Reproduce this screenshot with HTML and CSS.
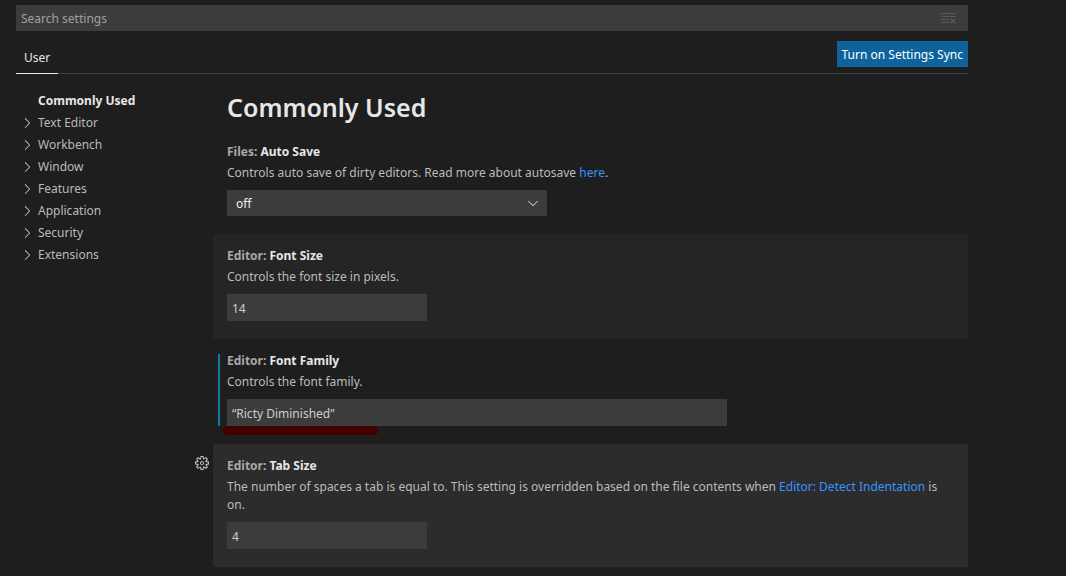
FILE: index.html
```html
<!DOCTYPE html>
<html lang="en">
<head>
<meta charset="utf-8">
<title>Settings</title>
<link rel="stylesheet" href="styles.css">
</head>
<body>
<svg width="0" height="0" class="symbols" aria-hidden="true">
  <symbol id="chevron-right" viewBox="0 0 16 16"><path d="M10.072 8.024L5.715 3.667l.618-.62L11 7.716v.618L6.333 13l-.618-.619 4.357-4.357z"/></symbol>
</svg>
<div class="settings">
  <header class="header">
    <div class="search">
      <input class="search-input" type="text" placeholder="Search settings" aria-label="Search settings">
      <button class="icon-button clear" type="button" aria-label="Clear search">
        <svg width="16" height="16" viewBox="0 0 16 16" fill="none" stroke="currentColor"><path d="M1 3.500h15M1 6.500h15M1 9.500h8M1 12.500h8"/><path d="M10.500 9l4.500 4M15 9l-4.500 4" stroke-width="1.500"/></svg>
      </button>
    </div>
    <div class="tabs">
      <button class="tab" type="button">User</button>
      <button class="sync" type="button">Turn on Settings Sync</button>
    </div>
  </header>
  <div class="content">
    <nav class="toc" aria-label="Settings sections">
      <a class="toc-row selected" href="#common">Commonly Used</a>
      <a class="toc-row" href="#text"><svg class="chevron"><use href="#chevron-right"/></svg>Text Editor</a>
      <a class="toc-row" href="#workbench"><svg class="chevron"><use href="#chevron-right"/></svg>Workbench</a>
      <a class="toc-row" href="#window"><svg class="chevron"><use href="#chevron-right"/></svg>Window</a>
      <a class="toc-row" href="#features"><svg class="chevron"><use href="#chevron-right"/></svg>Features</a>
      <a class="toc-row" href="#application"><svg class="chevron"><use href="#chevron-right"/></svg>Application</a>
      <a class="toc-row" href="#security"><svg class="chevron"><use href="#chevron-right"/></svg>Security</a>
      <a class="toc-row" href="#extensions"><svg class="chevron"><use href="#chevron-right"/></svg>Extensions</a>
    </nav>
    <main class="list">
      <h1 class="heading" id="common">Commonly Used</h1>
      <section class="item">
        <label class="title" for="autosave"><span class="category">Files:</span> Auto Save</label>
        <p class="description">Controls auto save of dirty editors. Read more about autosave <a class="link" href="#here">here</a>.</p>
        <div class="select-box">
          <select class="select" id="autosave"><option>off</option></select>
          <svg class="select-arrow" viewBox="0 0 16 16"><path d="M7.976 10.072l4.357-4.357.62.618L8.284 11h-.618L3 6.333l.619-.618 4.357 4.357z"/></svg>
        </div>
      </section>
      <section class="item focused">
        <label class="title" for="fontsize"><span class="category">Editor:</span> Font Size</label>
        <p class="description">Controls the font size in pixels.</p>
        <input class="field" id="fontsize" type="text" value="14">
      </section>
      <section class="item modified">
        <label class="title" for="fontfamily"><span class="category">Editor:</span> Font Family</label>
        <p class="description">Controls the font family.</p>
        <input class="field wide" id="fontfamily" type="text" value="“Ricty Diminished”">
        <span class="marker"></span>
      </section>
      <section class="item hovered">
        <button class="icon-button gear" type="button" aria-label="More actions">
          <svg width="16" height="16" viewBox="0 0 16 16" fill="currentColor" fill-rule="evenodd"><path d="M9.100 4.400L8.600 2H7.400l-.5 2.400-.7.300-2-1.300-.9.800 1.300 2-.2.700-2.400.5v1.200l2.400.5.300.8-1.300 2 .8.800 2-1.300.8.300.4 2.300h1.200l.5-2.400.8-.3 2 1.300.8-.8-1.300-2 .3-.8 2.300-.4V7.400l-2.400-.5-.3-.8 1.300-2-.8-.8-2 1.300-.7-.2zM9.400 1l.5 2.400L12 2.100l2 2-1.400 2.100 2.400.4v2.800l-2.400.5L14 12l-2 2-2.100-1.400-.5 2.400H6.600l-.5-2.400L4 13.900l-2-2 1.400-2.100L1 9.400V6.600l2.400-.5L2.100 4l2-2 2.100 1.400.4-2.400h2.800zm.6 7c0 1.100-.9 2-2 2s-2-.9-2-2 .9-2 2-2 2 .9 2 2zM8 9c.6 0 1-.4 1-1s-.4-1-1-1-1 .4-1 1 .4 1 1 1z"/></svg>
        </button>
        <label class="title" for="tabsize"><span class="category">Editor:</span> Tab Size</label>
        <p class="description">The number of spaces a tab is equal to. This setting is overridden based on the file contents when <a class="link" href="#detect">Editor: Detect Indentation</a> is on.</p>
        <input class="field" id="tabsize" type="text" value="4">
      </section>
    </main>
  </div>
</div>
</body>
</html>
```
FILE: styles.css
```css
* {
  box-sizing: border-box;
}

body {
  margin: 0;
  background: #1e1e1e;
  color: #bbbbbb;
  font: 12px/18px "Noto Sans", "Open Sans", sans-serif;
}

button,
input,
select {
  margin: 0;
  border: 0;
  border-radius: 0;
  font: inherit;
}

.symbols {
  display: none;
}

.settings {
  padding: 5px 98px 9px 16px;
}

.search {
  display: flex;
  align-items: center;
  height: 26px;
  padding-right: 12px;
  background: #3c3c3c;
}

.search-input {
  flex: 1;
  min-width: 0;
  padding: 1px 5px 0;
  background: transparent;
  color: #cccccc;
}

.search-input::placeholder {
  color: #a0a0a0;
  opacity: 1;
}

.icon-button {
  display: flex;
  padding: 0;
  background: transparent;
}

.clear {
  color: #585858;
}

.tabs {
  display: flex;
  align-items: flex-start;
  justify-content: space-between;
  margin-top: 10px;
  border-bottom: 1px solid #404040;
}

.tab {
  height: 33px;
  margin-bottom: -1px;
  padding: 2px 8px 0;
  border-bottom: 1px solid #e7e7e7;
  background: transparent;
  color: #e7e7e7;
}

.sync {
  height: 26px;
  padding: 2px 5px 0;
  background: #0e639c;
  color: #ffffff;
}

.content {
  display: grid;
  grid-template-columns: 197px 1fr;
}

.toc {
  padding-top: 16px;
}

.toc-row {
  display: flex;
  align-items: center;
  gap: 3px;
  height: 22px;
  padding-left: 3px;
  color: #bbbbbb;
  text-decoration: none;
}

.selected {
  padding-left: 22px;
  color: #e7e7e7;
  font-weight: 700;
}

.chevron {
  width: 16px;
  height: 16px;
  fill: #c5c5c5;
}

.heading {
  margin: 0;
  padding: 15px 14px 5px;
  color: #e7e7e7;
  font-size: 25px;
  font-weight: 600;
  line-height: 36px;
}

.item {
  position: relative;
  padding: 13px 20px 18px 14px;
}

.focused {
  background: #252525;
}

.hovered {
  background: #2c2c2c;
}

.modified::before {
  content: "";
  position: absolute;
  top: 15px;
  bottom: 18px;
  left: 5px;
  width: 2px;
  background: #0c7d9d;
}

.title {
  display: block;
  color: #e7e7e7;
  font-weight: 700;
}

.category {
  color: #a9a9a9;
}

.description {
  margin: 3px 0 8px;
}

.link {
  color: #3794ff;
  text-decoration: none;
}

.field {
  display: block;
  width: 200px;
  height: 27px;
  padding: 2px 5px 0;
  background: #3c3c3c;
  color: #cccccc;
}

.wide {
  width: 500px;
}

.select-box {
  position: relative;
  width: 320px;
}

.select {
  display: block;
  width: 100%;
  height: 26px;
  padding: 2px 9px 0;
  appearance: none;
  background: #3c3c3c;
  color: #f0f0f0;
}

.select-arrow {
  position: absolute;
  top: 5px;
  right: 6px;
  width: 16px;
  height: 16px;
  fill: #cccccc;
  pointer-events: none;
}

.marker {
  position: absolute;
  bottom: 9px;
  left: 10px;
  width: 155px;
  height: 9px;
  border-radius: 4px;
  background: #430000;
}

.gear {
  position: absolute;
  top: 11px;
  left: -19px;
  color: #c5c5c5;
}
```
